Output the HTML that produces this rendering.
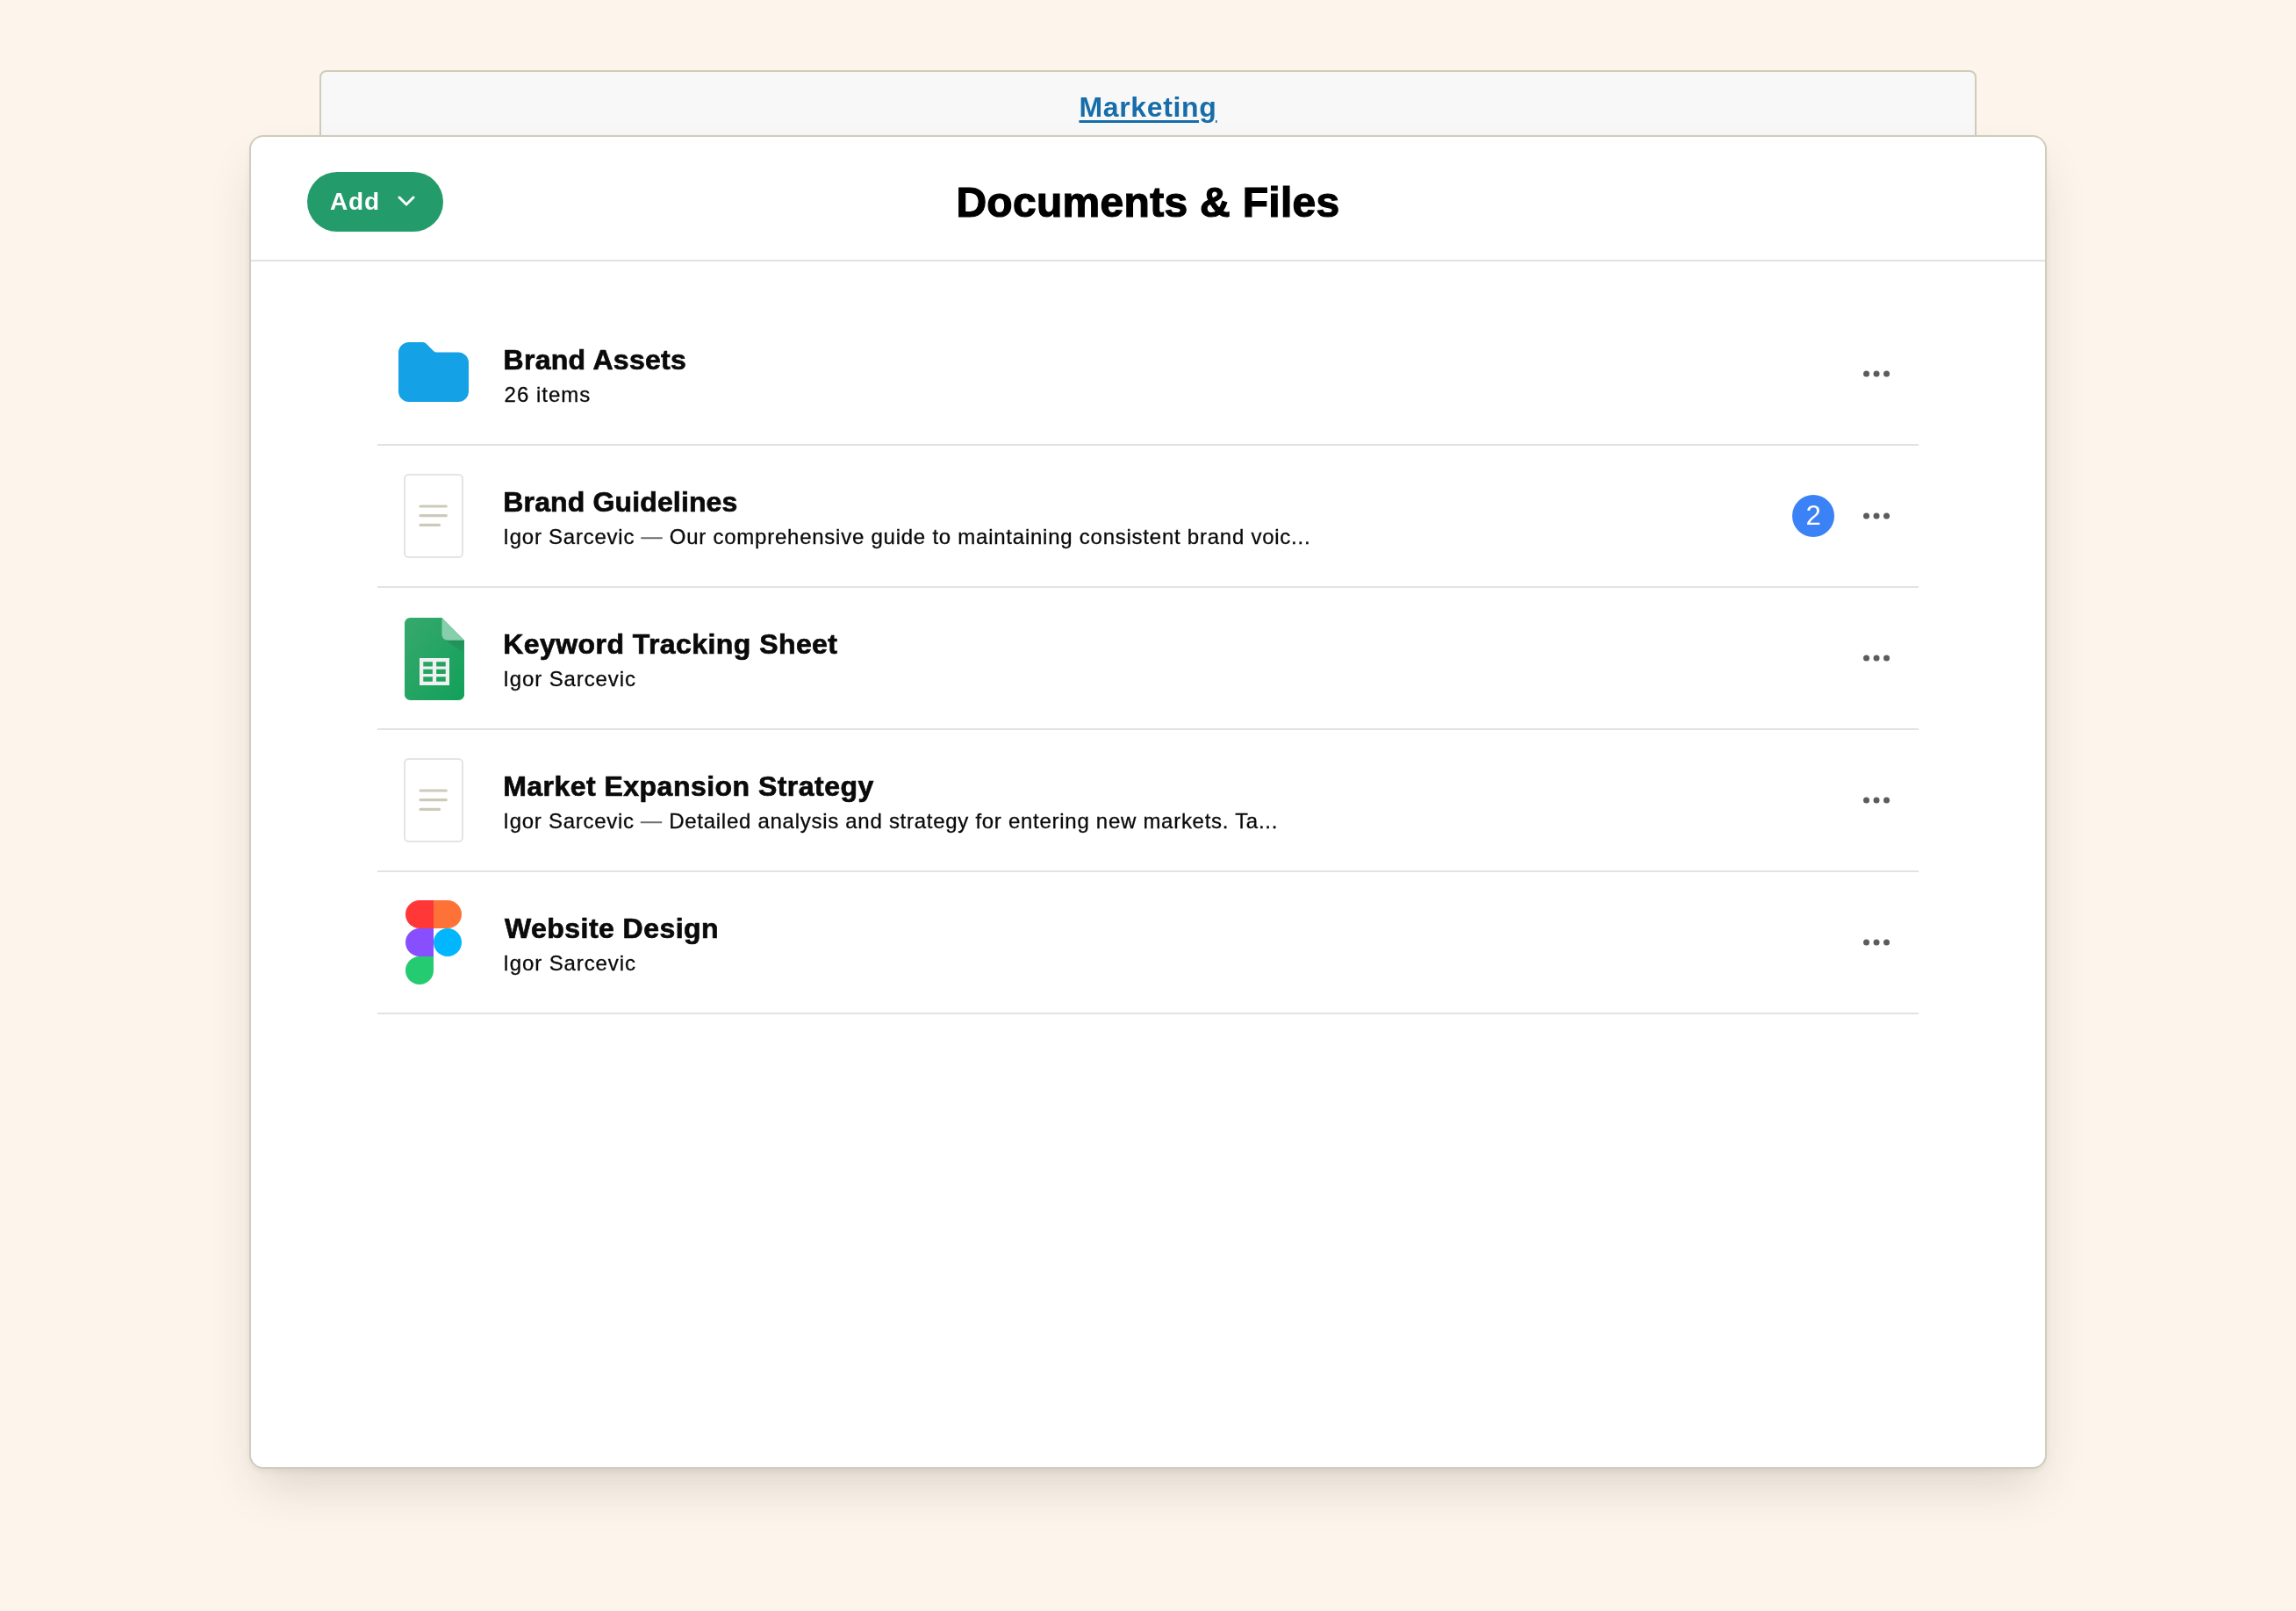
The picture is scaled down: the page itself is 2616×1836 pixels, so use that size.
<!DOCTYPE html>
<html><head><meta charset="utf-8">
<style>
html,body{margin:0;padding:0;}
.back,.card{will-change:transform;}
body{width:2616px;height:1836px;background:#fdf5ec;position:relative;overflow:hidden;font-family:"Liberation Sans",sans-serif;color:#0a0a0a;}
.back{position:absolute;left:364px;top:80px;width:1884px;height:120px;border:2px solid #d0ccba;border-radius:8px;background:#f8f8f8;box-sizing:content-box;}
.mk{position:absolute;left:0;right:0;top:0;text-align:center;font-size:32px;font-weight:700;color:#176da9;letter-spacing:0.66px;line-height:32px;}
.mk span{position:absolute;left:50%;transform:translateX(-50%);top:24px;text-decoration:underline;text-decoration-thickness:2.6px;text-underline-offset:4px;}
.card{position:absolute;left:284px;top:154px;width:2044px;height:1516px;border:2px solid #d0ccba;border-radius:16px;background:#fff;box-shadow:0 3px 6px rgba(40,30,20,0.06),0 28px 56px -12px rgba(50,40,30,0.17);}
.hdr{position:absolute;left:0;top:0;width:2044px;height:140px;border-bottom:2px solid #e2e2e2;}
.add{position:absolute;left:64px;top:40px;width:155px;height:68px;border-radius:34px;background:#239b6b;}
.add .t{position:absolute;left:26px;top:0;line-height:68px;font-size:28px;font-weight:700;color:#fff;letter-spacing:0.9px;}
.add svg{position:absolute;left:103px;top:27px;}
.title{position:absolute;left:0;right:0;top:0;text-align:center;font-size:48px;font-weight:700;color:#000;letter-spacing:0.3px;-webkit-text-stroke:1.2px #000;}
.title span{position:absolute;left:50%;transform:translateX(-50%);top:51px;white-space:nowrap;line-height:48px;}
.row{position:absolute;left:144px;width:1756px;height:160px;border-bottom:2px solid #e2e2e2;}
.row .ic{position:absolute;left:0;top:0;width:128px;height:160px;}
.row .ic svg{position:absolute;}
.row .tt{position:absolute;left:145px;top:0;white-space:nowrap;font-size:32px;font-weight:700;color:#0a0a0a;line-height:32px;-webkit-text-stroke:0.7px #0a0a0a;}
.row .st{position:absolute;left:145px;top:0;white-space:nowrap;font-size:24px;font-weight:400;color:#0a0a0a;line-height:24px;-webkit-text-stroke:0.3px #0a0a0a;}
.row .st .d{-webkit-text-stroke:0.5px #777;}
.row .st .d{color:#6e6e6e;position:relative;top:-1.5px;}
.dots{position:absolute;left:1693px;top:76px;width:30px;height:8px;}
.badge{position:absolute;left:1612px;top:56px;width:48px;height:48px;border-radius:50%;background:#3b82f6;color:#fff;font-size:31px;line-height:47px;text-align:center;}
</style></head>
<body>
<div class="back"><div class="mk"><span>Marketing</span></div></div>
<div class="card">
  <div class="hdr">
    <div class="add"><span class="t">Add</span>
      <svg width="20" height="12" viewBox="0 0 20 12"><path d="M2 2 L10 10 L18 2" fill="none" stroke="#fff" stroke-width="3" stroke-linecap="round" stroke-linejoin="round"/></svg>
    </div>
    <div class="title"><span>Documents &amp; Files</span></div>
  </div>
  <div class="row" style="top:190px">
    <div class="ic"><svg style="left:24px;top:44px" width="80" height="68" viewBox="0 0 80 68"><path d="M12 0 H28 Q30 0 31.5 1.5 L40 10 Q41.5 11.5 43.5 11.5 H68 A12 12 0 0 1 80 23 V56 A12 12 0 0 1 68 68 H12 A12 12 0 0 1 0 56 V12 A12 12 0 0 1 12 0 Z" fill="#14a1e6"/></svg></div>
    <div class="tt" style="top:48px;left:143.5px;letter-spacing:0.29px">Brand Assets</div>
    <div class="st" style="top:92px;left:144.6px;letter-spacing:1.0px">26 items</div>
    <svg class="dots" width="30" height="8" viewBox="0 0 30 8"><circle cx="3.5" cy="4" r="3.5" fill="#5c5c5c"/><circle cx="15" cy="4" r="3.5" fill="#5c5c5c"/><circle cx="26.5" cy="4" r="3.5" fill="#5c5c5c"/></svg>
  </div>
  <div class="row" style="top:352px">
    <div class="ic"><svg style="left:30px;top:32px" width="68" height="96" viewBox="0 0 68 96"><rect x="1" y="1" width="66" height="94" rx="4.5" fill="#fff" stroke="#e4e4e4" stroke-width="2"/><path d="M19 37 H48.3 M19 47.6 H48.3 M19 58.4 H40.5" stroke="#cdcabc" stroke-width="3.2" stroke-linecap="round"/></svg></div>
    <div class="tt" style="top:48px;left:143.3px;letter-spacing:0.14px">Brand Guidelines</div>
    <div class="st" style="top:92px;left:143.3px;letter-spacing:0.755px">Igor Sarcevic <span class="d">—</span> Our comprehensive guide to maintaining consistent brand voic...</div>
    <div class="badge">2</div>
    <svg class="dots" width="30" height="8" viewBox="0 0 30 8"><circle cx="3.5" cy="4" r="3.5" fill="#5c5c5c"/><circle cx="15" cy="4" r="3.5" fill="#5c5c5c"/><circle cx="26.5" cy="4" r="3.5" fill="#5c5c5c"/></svg>
  </div>
  <div class="row" style="top:514px">
    <div class="ic"><svg style="left:30.5px;top:34px" width="68" height="94" viewBox="0 0 47 65"><defs><linearGradient id="sbody" x1="0" y1="0" x2="1" y2="1"><stop offset="0" stop-color="#37a96d"/><stop offset="1" stop-color="#12a059"/></linearGradient><linearGradient id="sg" x1="50%" y1="8.6%" x2="50%" y2="100%"><stop offset="0" stop-color="#263238" stop-opacity="0.2"/><stop offset="1" stop-color="#263238" stop-opacity="0.02"/></linearGradient></defs><path d="M29.375 0H4.406C1.983 0 0 1.994 0 4.432v56.136C0 63.006 1.983 65 4.406 65h38.188C45.017 65 47 63.006 47 60.568V17.727L29.375 0z" fill="url(#sbody)"/><path d="M11.75 31.818v21.364h23.5V31.818h-23.5zm10.281 18.409H14.688v-3.693h7.343v3.693zm0-5.909H14.688v-3.693h7.343v3.693zm0-5.909H14.688v-3.693h7.343v3.693zm10.282 11.818h-7.344v-3.693h7.344v3.693zm0-5.909h-7.344v-3.693h7.344v3.693zm0-5.909h-7.344v-3.693h7.344v3.693z" fill="#f1f1f1"/><path d="M30.664 16.431L47 28.5V17.727z" fill="url(#sg)"/><path d="M29.375 0v13.295c0 2.449 1.972 4.432 4.406 4.432H47L29.375 0z" fill="#87ceac"/></svg></div>
    <div class="tt" style="top:48px;left:143.3px;letter-spacing:0.43px">Keyword Tracking Sheet</div>
    <div class="st" style="top:92px;left:143.3px;letter-spacing:0.88px">Igor Sarcevic</div>
    <svg class="dots" width="30" height="8" viewBox="0 0 30 8"><circle cx="3.5" cy="4" r="3.5" fill="#5c5c5c"/><circle cx="15" cy="4" r="3.5" fill="#5c5c5c"/><circle cx="26.5" cy="4" r="3.5" fill="#5c5c5c"/></svg>
  </div>
  <div class="row" style="top:676px">
    <div class="ic"><svg style="left:30px;top:32px" width="68" height="96" viewBox="0 0 68 96"><rect x="1" y="1" width="66" height="94" rx="4.5" fill="#fff" stroke="#e4e4e4" stroke-width="2"/><path d="M19 37 H48.3 M19 47.6 H48.3 M19 58.4 H40.5" stroke="#cdcabc" stroke-width="3.2" stroke-linecap="round"/></svg></div>
    <div class="tt" style="top:48px;left:143.2px;letter-spacing:0.47px">Market Expansion Strategy</div>
    <div class="st" style="top:92px;left:143.3px;letter-spacing:0.72px">Igor Sarcevic <span class="d">—</span> Detailed analysis and strategy for entering new markets. Ta...</div>
    <svg class="dots" width="30" height="8" viewBox="0 0 30 8"><circle cx="3.5" cy="4" r="3.5" fill="#5c5c5c"/><circle cx="15" cy="4" r="3.5" fill="#5c5c5c"/><circle cx="26.5" cy="4" r="3.5" fill="#5c5c5c"/></svg>
  </div>
  <div class="row" style="top:838px">
    <div class="ic"><svg style="left:32px;top:32px" width="64" height="96" viewBox="0 0 64 96"><path d="M32 0 H48 A16 16 0 0 1 48 32 H32 Z" fill="#ff7237"/><path d="M32 0 H16 A16 16 0 0 0 16 32 H32 Z" fill="#ff3737"/><path d="M32 32 H16 A16 16 0 0 0 16 64 H32 Z" fill="#874fff"/><circle cx="48" cy="48" r="16" fill="#00b6ff"/><path d="M32 64 H16 A16 16 0 1 0 32 80 Z" fill="#24cb71"/></svg></div>
    <div class="tt" style="top:48px;left:145px;letter-spacing:0.45px">Website Design</div>
    <div class="st" style="top:92px;left:143.3px;letter-spacing:0.88px">Igor Sarcevic</div>
    <svg class="dots" width="30" height="8" viewBox="0 0 30 8"><circle cx="3.5" cy="4" r="3.5" fill="#5c5c5c"/><circle cx="15" cy="4" r="3.5" fill="#5c5c5c"/><circle cx="26.5" cy="4" r="3.5" fill="#5c5c5c"/></svg>
  </div>
</div>
</body></html>
